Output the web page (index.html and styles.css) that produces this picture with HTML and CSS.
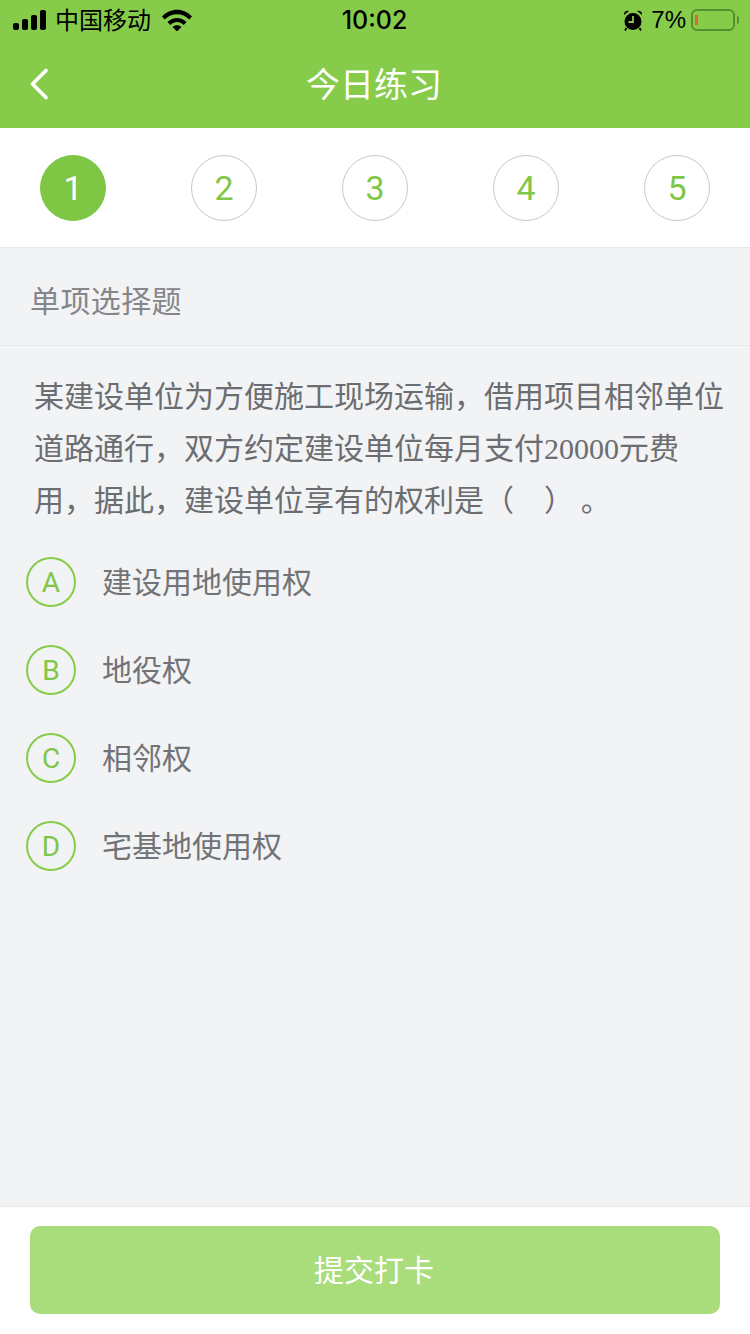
FILE: index.html
```html
<!DOCTYPE html>
<html lang="zh-CN">
<head>
  <meta charset="UTF-8" />
  <meta name="viewport" content="width=device-width, initial-scale=1.0"/>
  <title>今日练习</title>
  <link rel="stylesheet" href="styles.css">
</head>
<body>
  <div class="page">
    <header class="top">
      <div class="status">
        <div class="status-left">
          <svg class="signal" width="33" height="21" viewBox="0 0 33 21">
            <rect x="0" y="13" width="6" height="7" rx="2"/>
            <rect x="9" y="9" width="6" height="11" rx="2"/>
            <rect x="18" y="5" width="6" height="15" rx="2"/>
            <rect x="27" y="0" width="6" height="20" rx="2"/>
          </svg>
          <span class="carrier">中国移动</span>
          <svg class="wifi" width="30" height="22" viewBox="0 0 30 22">
            <path d="M0 7.500C8 -1.500 22 -1.500 30 7.500L27.200 10.500C20.500 3.500 9.500 3.500 2.800 10.500Z"/>
            <path d="M5.500 13C11 7.500 19 7.500 24.500 13L21.700 16C17.500 12 12.500 12 8.300 16Z"/>
            <path d="M10.500 18C13 15.500 17 15.500 19.500 18L15 22.500Z"/>
          </svg>
        </div>
        <div class="time">10:02</div>
        <div class="status-right">
          <svg class="alarm" width="18" height="21" viewBox="1 0.500 18 21">
            <circle cx="10" cy="12" r="8.500"/>
            <path d="M1 5.500C0.500 2.500 3 0.500 6 1.500Z"/>
            <path d="M19 5.500C19.500 2.500 17 0.500 14 1.500Z"/>
            <path d="M3.500 18.500L2 21M16.500 18.500L18 21" stroke="#000" stroke-width="1.800" fill="none"/>
            <path d="M10 6.500V12.500H5.500" stroke="#86cc4a" stroke-width="1.800" fill="none"/>
          </svg>
          <span class="battery-text">7%</span>
          <div class="battery">
            <div class="battery-level"></div>
          </div>
          <div class="battery-cap"></div>
        </div>
      </div>
      <div class="nav">
        <svg class="back" width="20" height="32" viewBox="0 0 20 32">
          <path d="M17 2.500L3.500 16L17 29.500" fill="none" stroke="#fff" stroke-width="3.600" stroke-linecap="round" stroke-linejoin="round"/>
        </svg>
        <h1 class="nav-title">今日练习</h1>
      </div>
    </header>

    <div class="steps">
      <div class="step active">1</div>
      <div class="step">2</div>
      <div class="step">3</div>
      <div class="step">4</div>
      <div class="step">5</div>
    </div>

    <main class="content">
      <div class="q-type">单项选择题</div>
      <div class="question">
        <div class="q-line">某建设单位为方便施工现场运输，借用项目相邻单位</div>
        <div class="q-line">道路通行，双方约定建设单位每月支付<span class="num">20000</span>元费</div>
        <div class="q-line">用，据此，建设单位享有的权利是（　）&nbsp;。</div>
      </div>
      <ul class="options">
        <li class="option"><span class="letter">A</span><span class="label">建设用地使用权</span></li>
        <li class="option"><span class="letter">B</span><span class="label">地役权</span></li>
        <li class="option"><span class="letter">C</span><span class="label">相邻权</span></li>
        <li class="option"><span class="letter">D</span><span class="label">宅基地使用权</span></li>
      </ul>
    </main>

    <footer class="bottom">
      <button class="submit">提交打卡</button>
    </footer>
  </div>
</body>
</html>
```

FILE: styles.css
```css
* {
  box-sizing: border-box;
}
html, body {
  margin: 0;
  height: 100%;
}
body {
  font-family: "Noto Sans CJK SC", "Liberation Sans", sans-serif;
  background: #f2f3f5;
  color: #666;
}

.page {
  display: flex;
  flex-direction: column;
  height: 1334px;
}

/* header */
.top {
  background: #86cc4a;
  height: 128px;
  flex: none;
}
.status {
  display: grid;
  grid-template-columns: 1fr auto 1fr;
  align-items: center;
  height: 40px;
  padding: 0 11px 0 13px;
  color: #000;
}
.status-left, .status-right {
  display: flex;
  align-items: center;
}
.status-right {
  justify-content: flex-end;
}
.carrier {
  font-size: 24px;
  line-height: 38px;
  height: 40px;
  margin-left: 9px;
}
.wifi {
  margin-left: 11px;
}
.time {
  font-family: Inter, "Liberation Sans", sans-serif;
  font-size: 25px;
  font-weight: 500;
  padding-right: 3px;
}
.alarm {
  margin-right: 9px;
}
.battery-text {
  font-family: "Liberation Sans", sans-serif;
  font-size: 24px;
  margin-right: 5px;
}
.battery {
  width: 44px;
  height: 22px;
  border: 2px solid #55922f;
  border-radius: 6px;
  padding: 4px 2px;
}
.battery-level {
  width: 3px;
  height: 100%;
  background: #e2672f;
}
.battery-cap {
  width: 2px;
  height: 8px;
  margin-left: 2px;
  background: #55922f;
  border-radius: 0 2px 2px 0;
}

.nav {
  position: relative;
  height: 88px;
  display: flex;
  align-items: center;
  justify-content: center;
}
.back {
  position: absolute;
  left: 29px;
  top: 28px;
}
.nav-title {
  margin: 0;
  padding-right: 2px;
  font-size: 34px;
  font-weight: 400;
  line-height: 86px;
  height: 88px;
  color: #fff;
}

/* step circles */
.steps {
  flex: none;
  height: 120px;
  background: #fff;
  border-bottom: 1px solid #e6e7e9;
  padding: 27px 40px 0;
  display: flex;
  justify-content: space-between;
}
.step {
  width: 66px;
  height: 66px;
  border-radius: 50%;
  border: 1px solid #c8c8c8;
  color: #80c747;
  font-family: Roboto, "Liberation Sans", sans-serif;
  font-size: 34px;
  display: flex;
  align-items: center;
  justify-content: center;
}
.step.active {
  background: #7fc645;
  border-color: #7fc645;
  color: #fff;
}

/* question */
.content {
  flex: 1;
}
.q-type {
  height: 98px;
  line-height: 103px;
  padding-left: 30px;
  font-size: 30px;
  letter-spacing: 0.4px;
  color: #85868a;
  border-bottom: 1px solid #e6e7e9;
}
.question {
  padding: 22px 0 0 34px;
  font-size: 30px;
  color: #6c6d70;
  white-space: nowrap;
}
.q-line {
  height: 52px;
  line-height: 52px;
}
.num {
  font-family: "Liberation Serif", serif;
}
.options {
  list-style: none;
  margin: 33px 0 0;
  padding: 0 0 0 26px;
}
.option {
  display: flex;
  align-items: center;
  height: 50px;
  margin-bottom: 38px;
  font-size: 30px;
  color: #727376;
}
.label {
  padding-bottom: 4px;
}
.letter {
  flex: none;
  width: 50px;
  height: 50px;
  margin-right: 26px;
  border: 2px solid #86cc4a;
  border-radius: 50%;
  color: #80c747;
  font-family: Roboto, "Liberation Sans", sans-serif;
  font-size: 28px;
  display: flex;
  align-items: center;
  justify-content: center;
}

/* submit */
.bottom {
  flex: none;
  height: 128px;
  background: #fff;
  border-top: 1px solid #e6e7e9;
  padding: 19px 30px 0;
}
.submit {
  display: block;
  width: 100%;
  height: 88px;
  padding: 0 2px 4px 0;
  border: none;
  border-radius: 10px;
  background: #a9dc7a;
  color: #fff;
  font-family: inherit;
  font-size: 30px;
}
```
